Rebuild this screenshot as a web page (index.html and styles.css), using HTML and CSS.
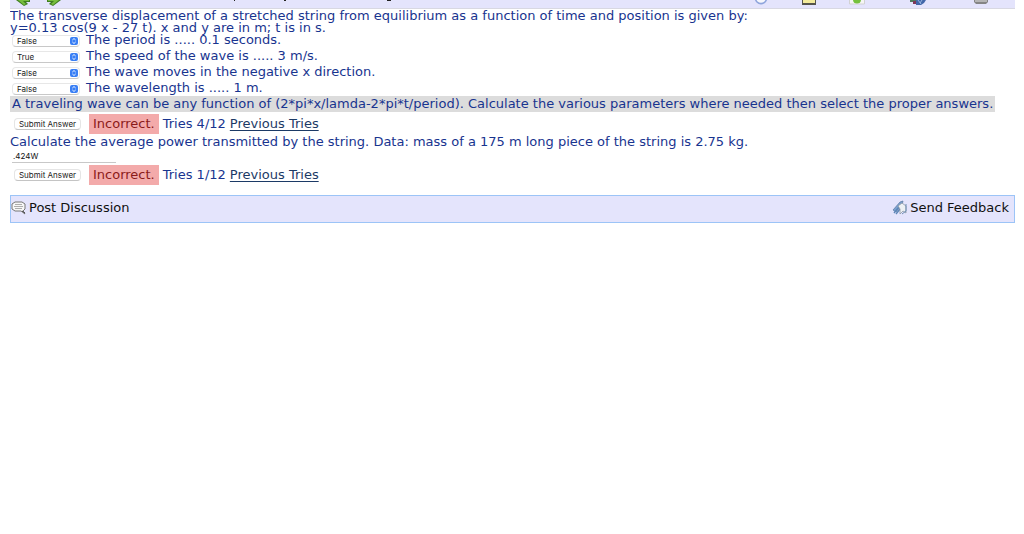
FILE: index.html
```html
<!DOCTYPE html>
<html lang="en">
<head>
<meta charset="utf-8">
<title>Stretched string</title>
<link rel="stylesheet" href="styles.css">
</head>
<body>
<header class="toolbar">
  <div class="nav">
    <button class="tool" aria-label="Previous"><svg width="18" height="7" viewBox="0 0 18 7"><path d="M1 0h14v2h-4l2 2-4 2z" fill="#3f7d20"/><path d="M3 0h11v1H8l3 3-2 1z" fill="#76bd3d"/></svg></button>
    <button class="tool" aria-label="Next"><svg width="18" height="7" viewBox="0 0 18 7"><path d="M17 0H3v2h4L5 4l4 2z" fill="#3f7d20"/><path d="M15 0H4v1h6L7 4l2 1z" fill="#76bd3d"/></svg></button>
  </div>
  <svg class="marks" width="160" height="2" viewBox="0 0 160 2" aria-hidden="true"><path d="M2 0h1v1H2zM52 0h2v1h-2zM155 0h4v1h-4z" fill="#222"/></svg>
  <div class="tools">
    <button class="tool" aria-label="Timer"><svg width="16" height="7" viewBox="0 0 16 7"><circle cx="8" cy="-2" r="5.6" fill="#f6f7fc" stroke="#8fa5dc" stroke-width="1.6"/></svg></button>
    <button class="tool" aria-label="Notes"><svg width="16" height="7" viewBox="0 0 16 7"><path d="M1 0h14v5H1z" fill="#55544b"/><path d="M2 0h12v3H2z" fill="#f3eb9b"/></svg></button>
    <button class="tool" aria-label="Evaluate"><svg width="16" height="7" viewBox="0 0 16 7"><path d="M.5 0v4h15V0" fill="#f5f5f5" stroke="#d2d2d2"/><circle cx="8" cy="-.5" r="4" fill="#75c13d"/></svg></button>
    <button class="tool" aria-label="Communicate"><svg width="18" height="7" viewBox="0 0 18 7"><path d="M1 0h6v4H4V2H1z" fill="#4f7a5c"/><path d="M4 1h3v3H4z" fill="#803858"/><path d="M7 0h10l-2 3-3 2H7z" fill="#4267a9"/><path d="M9 0l3 4M13 0l-2 3" stroke="#98b5df"/></svg></button>
    <button class="tool" aria-label="Print"><svg width="16" height="7" viewBox="0 0 16 7"><path d="M1 0h14v2l-2 2H3L1 2z" fill="#858585"/><path d="M2 0h12v2H2z" fill="#b5b5b5"/></svg></button>
  </div>
</header>
<main class="problem">
  <p class="statement">The transverse displacement of a stretched string from equilibrium as a function of time and position is given by:<br>y=0.13 cos(9 x - 27 t). x and y are in m; t is in s.</p>
  <div class="choices">
    <div class="choice"><span class="picker"><select id="q1"><option>False</option><option>True</option></select><svg class="arrows" width="8" height="8" viewBox="0 0 8 8"><rect width="8" height="8" rx="2" fill="#397ff5"/><path d="M2.3 3.1L4 1.5l1.7 1.6M2.3 4.9L4 6.5l1.7-1.6" fill="none" stroke="#fff" stroke-width=".9"/></svg></span><label for="q1">The period is ..... 0.1 seconds.</label></div>
    <div class="choice"><span class="picker"><select id="q2"><option>True</option><option>False</option></select><svg class="arrows" width="8" height="8" viewBox="0 0 8 8"><rect width="8" height="8" rx="2" fill="#397ff5"/><path d="M2.3 3.1L4 1.5l1.7 1.6M2.3 4.9L4 6.5l1.7-1.6" fill="none" stroke="#fff" stroke-width=".9"/></svg></span><label for="q2">The speed of the wave is ..... 3 m/s.</label></div>
    <div class="choice"><span class="picker"><select id="q3"><option>False</option><option>True</option></select><svg class="arrows" width="8" height="8" viewBox="0 0 8 8"><rect width="8" height="8" rx="2" fill="#397ff5"/><path d="M2.3 3.1L4 1.5l1.7 1.6M2.3 4.9L4 6.5l1.7-1.6" fill="none" stroke="#fff" stroke-width=".9"/></svg></span><label for="q3">The wave moves in the negative x direction.</label></div>
    <div class="choice"><span class="picker"><select id="q4"><option>False</option><option>True</option></select><svg class="arrows" width="8" height="8" viewBox="0 0 8 8"><rect width="8" height="8" rx="2" fill="#397ff5"/><path d="M2.3 3.1L4 1.5l1.7 1.6M2.3 4.9L4 6.5l1.7-1.6" fill="none" stroke="#fff" stroke-width=".9"/></svg></span><label for="q4">The wavelength is ..... 1 m.</label></div>
  </div>
  <p class="hint">A traveling wave can be any function of (2*pi*x/lamda-2*pi*t/period). Calculate the various parameters where needed then select the proper answers.</p>
  <div class="result"><button class="submit">Submit Answer</button><span class="verdict">Incorrect.</span><span class="tries">Tries 4/12</span><a href="#">Previous Tries</a></div>
  <label class="question" for="power">Calculate the average power transmitted by the string. Data: mass of a 175 m long piece of the string is 2.75 kg.</label>
  <input class="answer" id="power" type="text" value=".424W">
  <div class="result"><button class="submit">Submit Answer</button><span class="verdict">Incorrect.</span><span class="tries">Tries 1/12</span><a href="#">Previous Tries</a></div>
</main>
<footer class="feedback">
  <a href="#"><svg width="16" height="16" viewBox="0 0 16 16"><path d="M4 2h7l3 2v5l-2 2 2 3-4-3H4L1 9V4z" fill="#f7f7f7" stroke="#777"/><path d="M4 4.5h7M3 6.5h9M4 8.5h7" stroke="#999" stroke-width=".8"/><path d="M11 11l3 2" stroke="#444"/></svg>Post Discussion</a>
  <a href="#"><svg width="16" height="16" viewBox="0 0 16 16"><path d="M1 10L8 2l3-1-1 4-6 7z" fill="#7ba0cf" stroke="#58799f" stroke-width=".7"/><path d="M2 13l5-6M4 14l4-5" stroke="#5d86b8" stroke-width="1.4"/><path d="M6 6l4-3 4 3v7l-3-2-3 3V9z" fill="#edf1f4" stroke="#8b98a5" stroke-width=".8"/><path d="M14 4v7l-4 3" fill="none" stroke="#6c8db3"/></svg>Send Feedback</a>
</footer>
</body>
</html>
```
FILE: styles.css
```css
body {
  margin: 0 9px 0 10px;
  background: #fff;
  color: #18348f;
  font: 13px/16px Verdana, "DejaVu Sans", sans-serif;
}
p { margin: 0; }
button { cursor: pointer; }
.toolbar {
  display: flex;
  justify-content: space-between;
  align-items: flex-start;
  height: 8px;
  background: #e4e4fc;
  border-bottom: 1px solid #d8d8e2;
}
.nav { display: flex; gap: 11px; padding-left: 5px; }
.tools { display: flex; gap: 32px; padding-right: 26px; }
.tools .tool:nth-child(4) { margin-left: 12px; }
.tools .tool:nth-child(5) { margin-left: 14px; }
.tool { display: block; padding: 0; border: 0; background: none; }
.tool svg, .marks, .feedback svg { display: block; }
.marks { margin: 0 auto 0 170px; }
.statement { padding-top: 1px; line-height: 12px; }
.choices {
  display: grid;
  grid-auto-rows: 16px;
  margin-top: -2px;
  padding-left: 2px;
}
.choice { display: flex; align-items: center; gap: 6px; }
.picker { position: relative; display: flex; padding-top: 2px; }
.picker select {
  appearance: none;
  width: 68px;
  height: 12px;
  padding: 0 4px;
  border: 1px solid #e7e7e7;
  border-bottom-color: #c8c8c8;
  border-radius: 4px;
  background: #fff;
  color: #222;
  font: 8px/10px Inter, sans-serif;
}
.arrows { position: absolute; right: 2px; top: 4px; pointer-events: none; }
.hint {
  width: fit-content;
  padding: 0 2px;
  background: #dcdcdc;
}
.result { display: flex; align-items: center; padding: 2px 4px 0; }
.submit {
  width: 67px;
  height: 12px;
  padding: 0;
  border: 1px solid #e5e5e5;
  border-bottom-color: #c4c4c4;
  border-radius: 4px;
  background: #fff;
  color: #222;
  font: 8px/10px Inter, sans-serif;
}
.verdict {
  margin: 0 4px 0 8px;
  padding: 2px 4px;
  background: #f3aaaa;
  color: #8b1a1a;
}
.tries { margin-right: 4px; }
.result a { color: #1c3a66; text-underline-offset: 2px; }
.question { display: block; }
.answer {
  display: block;
  box-sizing: border-box;
  width: 104px;
  height: 13px;
  margin-left: 2px;
  padding: 0 1px;
  border: 0;
  border-bottom: 1px solid #c8c8c8;
  color: #111;
  font: 8px/12px Inter, sans-serif;
}
.feedback {
  display: flex;
  justify-content: space-between;
  margin-top: 10px;
  padding: 4px 5px 6px 0;
  border: 1px solid #9cc4f7;
  background: #e4e4fc;
}
.feedback a {
  display: flex;
  align-items: center;
  gap: 2px;
  color: #111;
  text-decoration: none;
}
```
